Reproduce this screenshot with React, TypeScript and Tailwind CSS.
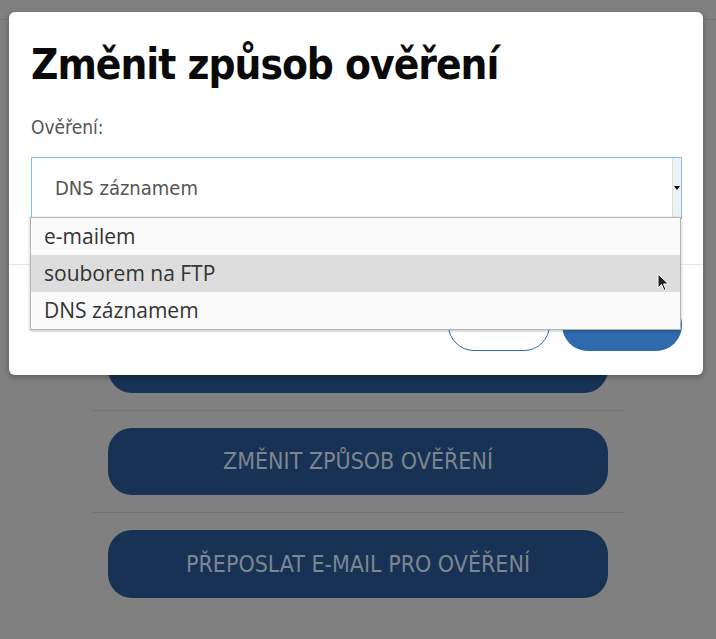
import React from 'react'

const narrow = { fontFamily: '"Liberation Sans Narrow", "DejaVu Sans Condensed", "Liberation Sans", sans-serif' }

function Cursor() {
  return (
    <svg width="14" height="20" viewBox="0 0 14 20" className="absolute left-[657px] top-[273px]">
      <path d="M1 1 L1 15 L4.5 11.5 L7 17.5 L9 16.6 L6.6 11 L11.5 11 Z" fill="#222" stroke="#fff" strokeWidth="1" />
    </svg>
  )
}

export default function App() {
  return (
    <div className="relative h-[639px] w-[716px] overflow-hidden bg-[#808080]" style={narrow}>
      {/* page behind the overlay */}
      <div className="flex flex-col">
        <div className="h-[20px] border-b border-[#747474]" />
        <div className="mx-[92px] flex flex-col pt-[306px]">
          <div className="mx-[16px] h-[67px] rounded-[24px] bg-[#173254]" />
          <div className="mt-[17px] h-px bg-[#747474]" />
          <div className="mx-[16px] mt-[17px] flex h-[67px] items-center justify-center rounded-[24px] bg-[#173254] text-[23px] text-[#7d8591]">
            ZMĚNIT ZPŮSOB OVĚŘENÍ
          </div>
          <div className="mt-[17px] h-px bg-[#747474]" />
          <div className="mx-[16px] mt-[17px] flex h-[68px] items-center justify-center rounded-[24px] bg-[#173254] text-[23px] text-[#7d8591]">
            PŘEPOSLAT E-MAIL PRO OVĚŘENÍ
          </div>
        </div>
      </div>

      {/* modal */}
      <div className="absolute left-[9px] top-[12px] flex h-[363px] w-[694px] flex-col rounded-[6px] bg-white shadow-[0_2px_6px_rgba(0,0,0,0.3)]">
        <div className="px-[22px] pt-[27px]">
          <h1 className="text-[42px] font-bold leading-[52px] tracking-[-1px] text-[#0a0a0a]">Změnit způsob ověření</h1>
          <div className="mt-[22px] text-[19px] font-light text-[#555]">Ověření:</div>
          <div className="mt-[15px] flex h-[62px] w-[651px] items-center border border-[#80bdff] bg-white">
            <span className="flex-1 pl-[23px] text-[20px] font-light text-[#555]">DNS záznamem</span>
            <div className="flex h-full w-[9px] items-center justify-center border-l border-[#ddd] bg-[#f1f1f1]">
              <div className="h-0 w-0 border-x-[3px] border-t-[4px] border-x-transparent border-t-black" />
            </div>
          </div>
        </div>
        <div className="mt-[45px] h-px bg-[#e5e5e5]" />
        <div className="flex justify-end gap-[12px] px-[21px] pt-[34px]">
          <div className="h-[52px] w-[102px] rounded-[26px] border border-[#2e6aad]" />
          <div className="h-[52px] w-[120px] rounded-[26px] bg-[#2e6aad]" />
        </div>
      </div>

      {/* open select list */}
      <div
        className="absolute left-[30px] top-[217px] flex w-[651px] flex-col border border-[#b5b5b5] bg-[#fafafa] text-[21px] text-[#333] shadow-[0_1px_3px_rgba(0,0,0,0.25)]"
        style={{ fontFamily: '"Open Sans", "Noto Sans", sans-serif' }}
      >
        <div className="flex h-[37px] items-center px-[13px]">e-mailem</div>
        <div className="flex h-[37px] items-center bg-[#dddddd] px-[13px]">souborem na FTP</div>
        <div className="flex h-[37px] items-center px-[13px]">DNS záznamem</div>
      </div>

      <Cursor />
    </div>
  )
}
